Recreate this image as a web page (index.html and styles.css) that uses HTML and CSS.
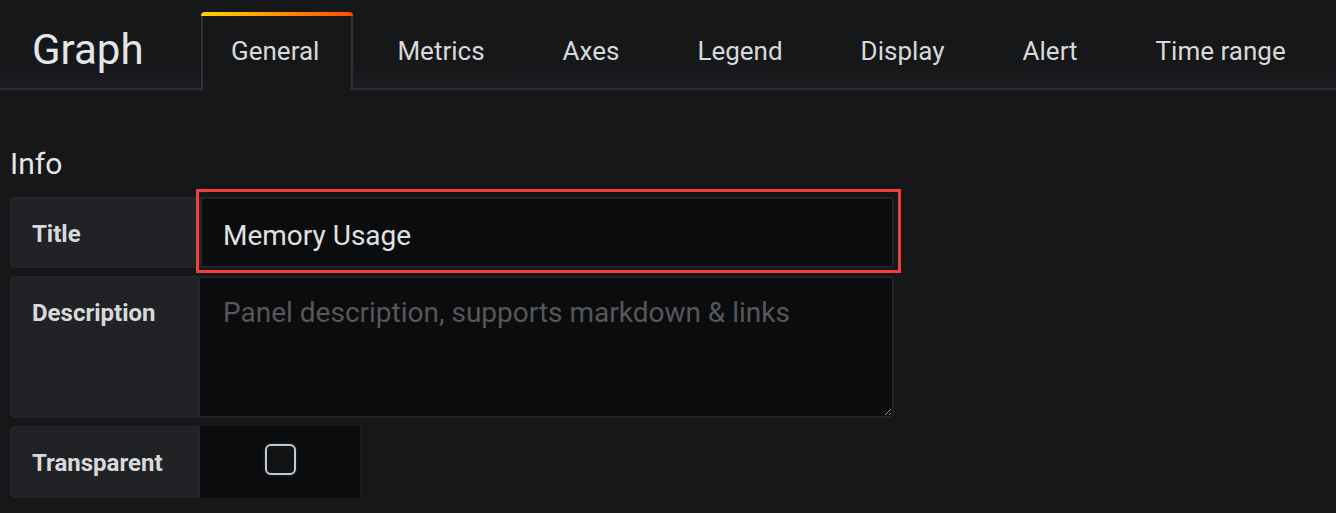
FILE: index.html
```html
<!DOCTYPE html>
<html>
<head>
<meta charset="utf-8">
<link rel="stylesheet" href="styles.css">
</head>
<body>
<header class="edit-header">
  <div class="edit-title">Graph</div>
  <nav class="tabs">
    <div class="tab active">General</div>
    <div class="tab">Metrics</div>
    <div class="tab">Axes</div>
    <div class="tab">Legend</div>
    <div class="tab">Display</div>
    <div class="tab">Alert</div>
    <div class="tab">Time range</div>
  </nav>
</header>
<main class="content">
  <h3 class="section-title">Info</h3>
  <div class="form-row">
    <label class="form-label">Title</label>
    <div class="highlight">
      <input class="form-input" type="text" value="Memory Usage">
    </div>
  </div>
  <div class="form-row">
    <label class="form-label">Description</label>
    <textarea class="form-textarea" placeholder="Panel description, supports markdown &amp; links"></textarea>
  </div>
  <div class="form-row">
    <label class="form-label">Transparent</label>
    <div class="check-cell"><span class="checkbox"></span></div>
  </div>
</main>
</body>
</html>
```

FILE: styles.css
```css
* { box-sizing: border-box; }
html, body {
  margin: 0;
  background: #161719;
  color: #d8d9da;
  font-family: Roboto, "Liberation Sans", sans-serif;
}
.edit-header {
  display: flex;
  align-items: flex-end;
  height: 90px;
  border-bottom: 2px solid #2c2d30;
  background: linear-gradient(180deg, #161719 0%, #161719 70%, #1b1c1f 100%);
}
.edit-title {
  width: 201px;
  padding-left: 32px;
  font-size: 42px;
  line-height: 48px;
  margin-bottom: 14px;
  color: #e4e5e6;
}
.tabs {
  display: flex;
  gap: 16px;
  margin-bottom: -2px;
}
.tab {
  height: 78px;
  padding: 20px 34px 0 28px;
  font-size: 26px;
  line-height: 30px;
  color: #d8d9da;
  border-top: 4px solid transparent;
}
.tab.active {
  position: relative;
  background: #161719;
  border-left: 2px solid #2f3033;
  border-right: 2px solid #2f3033;
  border-radius: 4px 4px 0 0;
  padding-left: 28px;
  padding-right: 32px;
}
.tab.active::before {
  content: "";
  position: absolute;
  top: -4px;
  left: -2px;
  right: -2px;
  height: 4px;
  border-radius: 4px 4px 0 0;
  background: linear-gradient(90deg, #ffd200 0%, #ff9a00 45%, #ff4a05 100%);
}
.content {
  padding: 56px 10px 0 10px;
}
.section-title {
  margin: 0 0 15px 0;
  font-size: 30px;
  line-height: 36px;
  font-weight: 400;
  color: #e4e5e6;
}
.form-row {
  display: flex;
  margin-bottom: 8px;
}
.form-label {
  width: 190px;
  flex: none;
  padding: 22px 0 0 21px;
  font-size: 24px;
  line-height: 28px;
  font-weight: 700;
  color: #d8d9da;
  background: #212226;
  border: 1px solid #26272a;
  border-radius: 4px 0 0 4px;
}
.form-row:nth-child(2) .form-label { height: 71px; }
.form-row:nth-child(3) .form-label { height: 142px; }
.form-row:nth-child(4) .form-label { height: 72px; }
.highlight {
  position: relative;
  width: 694px;
  height: 71px;
}
.highlight::after {
  content: "";
  position: absolute;
  top: -8px;
  left: -4px;
  right: -7px;
  bottom: -5px;
  border: 3px solid #f0403c;
  pointer-events: none;
}
.form-input {
  display: block;
  width: 694px;
  height: 71px;
  margin: 0;
  padding: 5px 0 0 21px;
  font-family: Roboto, "Liberation Sans", sans-serif;
  font-size: 28px;
  color: #e0e1e2;
  background: #0b0c0e;
  border: 2px solid #232427;
  border-radius: 0 4px 4px 0;
  outline: none;
}
.form-textarea {
  display: block;
  width: 694px;
  height: 142px;
  margin: 0;
  padding: 18px 20px 16px 23px;
  font-family: Roboto, "Liberation Sans", sans-serif;
  font-size: 28px;
  line-height: 34px;
  color: #e0e1e2;
  background: #0b0c0e;
  border: 2px solid #232427;
  border-left: none;
  border-radius: 0 4px 4px 0;
  outline: none;
}
.form-textarea::placeholder {
  color: #56575a;
}
.check-cell {
  width: 162px;
  height: 72px;
  display: flex;
  align-items: center;
  justify-content: center;
  padding-bottom: 5px;
  background: #0b0c0e;
  border-right: 2px solid #1d1e21;
}
.checkbox {
  display: block;
  width: 31px;
  height: 31px;
  border: 2px solid #c2c9d0;
  border-radius: 6px;
  background: #111214;
  box-shadow: 0 0 3px rgba(255, 255, 255, 0.2);
}
```
